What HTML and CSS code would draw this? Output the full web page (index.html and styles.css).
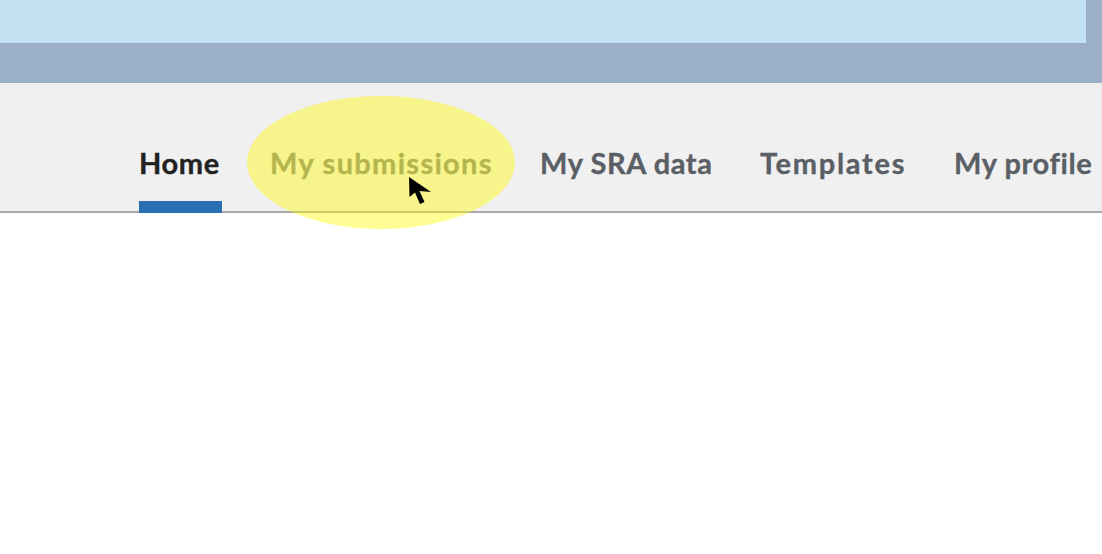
FILE: index.html
```html
<!DOCTYPE html>
<html>
<head>
<meta charset="utf-8">
<link rel="stylesheet" href="styles.css">
</head>
<body>
<header class="masthead">
  <div class="banner"></div>
</header>
<nav class="tabs">
  <a class="tab active" href="#">Home</a>
  <a class="tab hover loose" href="#">My submissions</a>
  <a class="tab" href="#">My SRA data</a>
  <a class="tab looser" href="#">Templates</a>
  <a class="tab" href="#">My profile</a>
  <div class="highlight"></div>
  <svg class="cursor" width="28" height="34" viewBox="0 0 28 34">
    <path d="M2 1 L2.5 21 L8 16.5 L13 28 L17.5 26 L12.5 15 L24 16 Z" fill="#000"/>
  </svg>
</nav>
<main class="content"></main>
</body>
</html>
```
FILE: styles.css
```css
html, body { margin: 0; padding: 0; background: #fff; }
body { font-family: "Lato", "Liberation Sans", sans-serif; width: 1102px; height: 554px; overflow: hidden; }
.masthead { background: #9bafc8; height: 83px; }
.banner { background: #c3e2f4; width: 1086px; height: 43px; }
.tabs {
  position: relative;
  background: #f0f0f0;
  height: 128px;
  border-bottom: 2px solid #a9a9ad;
  display: grid;
  grid-template-columns: 83px 222px 172px 146px 148px;
  column-gap: 48px;
  padding-left: 139px;
  white-space: nowrap;
}
.tab {
  display: block;
  font-weight: 700;
  font-size: 29px;
  letter-spacing: 0.6px;
  -webkit-text-stroke: 0.35px currentColor;
  color: #5a5f66;
  text-decoration: none;
  padding-top: 62px;
  height: 130px;
  line-height: 36px;
  box-sizing: border-box;
  position: relative;
}
.tab.loose { letter-spacing: 1.3px; }
.tab.looser { letter-spacing: 1.7px; }
.tab.active { color: #222; }
.tab.active::after {
  content: "";
  position: absolute;
  left: 0; right: 0;
  bottom: 0;
  height: 12px;
  background: #2b6fb3;
}
.tab.hover { color: #7f8388; }
.highlight {
  position: absolute;
  left: 247px; top: 13px;
  width: 268px; height: 133px;
  border-radius: 50%;
  background: rgba(255, 250, 0, 0.42);
}
.cursor { position: absolute; left: 407px; top: 93px; }
```
